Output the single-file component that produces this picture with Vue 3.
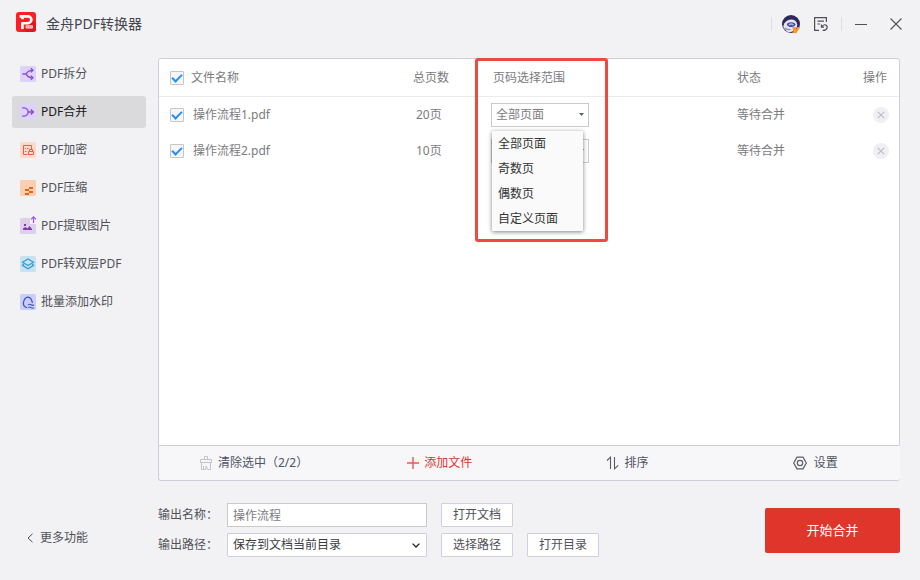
<script setup>
import { ref, computed } from 'vue'

const tools = [
  { id: 'split', label: 'PDF拆分' },
  { id: 'merge', label: 'PDF合并' },
  { id: 'lock', label: 'PDF加密' },
  { id: 'compress', label: 'PDF压缩' },
  { id: 'image', label: 'PDF提取图片' },
  { id: 'layer', label: 'PDF转双层PDF' },
  { id: 'watermark', label: '批量添加水印' }
]
const active = ref('merge')

const ranges = ['全部页面', '奇数页', '偶数页', '自定义页面']
const files = ref([
  { name: '操作流程1.pdf', pages: 20, range: '全部页面', status: '等待合并', checked: true },
  { name: '操作流程2.pdf', pages: 10, range: '全部页面', status: '等待合并', checked: true }
])
const openRow = ref(0)
const outputName = ref('操作流程')
const outputPath = ref('保存到文档当前目录')

const selectedCount = computed(() => files.value.filter((f) => f.checked).length)
const allChecked = computed({
  get: () => files.value.length > 0 && selectedCount.value === files.value.length,
  set: (value) => files.value.forEach((f) => { f.checked = value })
})

function pick(file, range) {
  file.range = range
  openRow.value = -1
}
function clearSelected() {
  files.value = files.value.filter((f) => !f.checked)
}
</script>

<template>
  <div class="app">
    <header class="titlebar">
      <svg class="logo" viewBox="0 0 20 20" aria-hidden="true">
        <rect width="20" height="20" rx="3" fill="#fb2025" />
        <path d="M8 17 L17 8 L20 11 V17 a3 3 0 0 1-3 3 H10z" fill="#dd181e" />
        <path d="M3.6 4.4 H12 a3.4 3.4 0 0 1 0 6.8 H6.4 V17" fill="none" stroke="#fff" stroke-width="2.6" stroke-linejoin="round" />
        <path d="M4.4 5 H7.8 V7.2 H5.6z" fill="#fff" />
        <rect x="9.6" y="13.2" width="7.4" height="3.4" rx="1" fill="#fbd5d6" />
        <path d="M10.8 14.9 H15.8" stroke="#ee6669" stroke-width="1" stroke-dasharray="1.3 .5" />
      </svg>
      <h1>金舟PDF转换器</h1>
      <div class="window-tools">
        <span class="divider"></span>
        <button class="icon-button avatar" type="button" aria-label="账户">
          <svg width="20" height="20" viewBox="0 0 20 20">
            <circle cx="10" cy="10" r="9" fill="#30275a" />
            <path d="M3.4 9.2 Q6 5.2 11 5.4 Q15.5 6 16.2 10.5 Q16.3 14.5 13 16.8 Q9 19 6 17.6 Q3 16 2.2 12.6z" fill="#e4e4f6" />
            <path d="M5.8 10.2 Q6.6 8.2 10.4 8.2 Q14.2 8.4 14.6 10.6 Q14 13 10.4 13 Q6.4 13 5.8 10.2z" fill="#4b4a96" />
            <path d="M8 11 q2-1.8 4.4-.2" fill="none" stroke="#a9baf4" stroke-width="1.4" />
            <path d="M3.6 14 Q5.6 16 9.4 15.4" fill="none" stroke="#8183bf" stroke-width="1.3" />
            <path d="M11.4 13 h3.2 l.4 2.6 l1.6-2.6 h2.8 l-4.2 6.2 h-2.6z" fill="#ff9820" />
          </svg>
        </button>
        <button class="icon-button history" type="button" aria-label="转换记录">
          <svg width="16" height="16" viewBox="0 0 16 16" fill="none" stroke="#505158" stroke-width="1.2">
            <path d="M6 14.4 H1.6 V1.6 H13.4 V6" />
            <path d="M4.5 5.1 H11 M4.5 8 H7" />
            <path d="M8.4 8.6 V11.2 H11 M8.8 11 Q10 8.4 12.2 8.8 Q14.6 9.6 14.1 12 Q13 14.8 9.6 14.4" />
          </svg>
        </button>
        <span class="divider"></span>
        <button class="icon-button minimize" type="button" aria-label="最小化">
          <svg width="12" height="12" viewBox="0 0 12 12"><path d="M0 6.5 H12" stroke="#505158" /></svg>
        </button>
        <button class="icon-button" type="button" aria-label="关闭">
          <svg width="12" height="12" viewBox="0 0 12 12"><path d="M.5 .5 L11.5 11.5 M11.5 .5 L.5 11.5" stroke="#505158" stroke-width="1.1" /></svg>
        </button>
      </div>
    </header>

    <div class="body">
      <aside class="sidebar">
        <nav>
          <button
            v-for="tool in tools"
            :key="tool.id"
            type="button"
            class="nav-item"
            :class="{ active: tool.id === active }"
            @click="active = tool.id"
          >
            <svg v-if="tool.id === 'split'" viewBox="0 0 16 16" fill="none" stroke="#8f4bc5">
              <rect width="16" height="16" rx="1.5" fill="#dcd3fc" stroke="none" />
              <path d="M2.5 8 H6.5 M6.3 8 Q7.3 4.5 12.5 4.3 M6.3 8 Q7.3 11.5 12.5 11.8" stroke-width="1.3" />
              <path d="M10.8 2.2 L13 4.3 L10.8 6.4 M10.8 9.6 L13 11.8 L10.8 13.9" stroke-width="1.3" />
            </svg>
            <svg v-else-if="tool.id === 'merge'" viewBox="0 0 16 16" fill="none" stroke="#8f4bc5">
              <rect width="16" height="16" rx="1.5" fill="#dcd3fc" stroke="none" />
              <path d="M2.2 3.9 H4 Q7.8 4.3 8.2 8 Q7.8 11.8 4 12.2 H2.2 M8 8 H13" stroke-width="1.3" />
              <path d="M10.8 5.6 L13.3 8 L10.8 10.4" stroke-width="1.5" />
            </svg>
            <svg v-else-if="tool.id === 'lock'" viewBox="0 0 16 16" fill="none" stroke="#ee5a5a">
              <rect width="16" height="16" rx="1.5" fill="#fddcc7" stroke="none" />
              <path d="M7.5 12.5 H3.5 V3.5 H11.5 V7 M5 6.5 H6 M7 6.5 H8.5 M5 9.5 H6.5" />
              <path d="M8.5 9.5 H13.5 V12.5 H8.5z M9.5 9.5 V7.5 H12.5 V9.5" />
            </svg>
            <svg v-else-if="tool.id === 'compress'" viewBox="0 0 16 16" fill="#e2681c">
              <rect width="16" height="16" rx="1.5" fill="#fdcfb0" />
              <path d="M9 7 h4 v2 h-4z M5 9 h4 v2 h-4z M9 11 h4 v2 h-4z M5 13 h4 v2 h-4z" />
            </svg>
            <svg v-else-if="tool.id === 'image'" viewBox="0 0 16 16">
              <path d="M1.5 0 H10 V6 H16 V14.5 a1.5 1.5 0 0 1-1.5 1.5 H1.5 A1.5 1.5 0 0 1 0 14.5 V1.5 A1.5 1.5 0 0 1 1.5 0z" fill="#ddd0ea" />
              <path d="M3 12 V10.5 L5.5 9 L7.5 10.5 L9.5 8 L12 11 V12z M4 6 h2 v2 h-2z" fill="#7b3eaa" />
              <path d="M13.5 5 V-1 M11 1.4 L13.5 -1.2 L16 1.4" fill="none" stroke="#a34cec" stroke-width="1.2" />
            </svg>
            <svg v-else-if="tool.id === 'layer'" viewBox="0 0 16 16" fill="none" stroke="#369ed4">
              <rect width="16" height="16" rx="1.5" fill="#c8e2ef" stroke="none" />
              <path d="M8 3 L13.5 6.3 L8 9.6 L2.5 6.3z" stroke-width="1.3" />
              <path d="M3.8 8 L2.5 9.3 L8 12.8 L13.5 9.3 L12.2 8" stroke-width="1.3" />
            </svg>
            <svg v-else viewBox="0 0 16 16" fill="none" stroke="#3f58b5">
              <rect width="16" height="16" rx="1.5" fill="#cacffa" stroke="none" />
              <path d="M7 13.6 Q3.2 13 3.4 8.6 Q4.6 3.4 8 3.2 Q11.4 3.4 12.4 9" stroke-width="1.3" />
              <path d="M8 10.8 q1.5-1.2 3 0 t3 0 M8 13.6 q1.5-1.2 3 0 t3 0" stroke-width="1.1" />
            </svg>
            <span>{{ tool.label }}</span>
          </button>
        </nav>
        <button class="more" type="button">
          <svg width="6" height="10" viewBox="0 0 6 10"><path d="M5.5 .8 L1 5 L5.5 9.2" fill="none" stroke="#505158" /></svg>
          <span>更多功能</span>
        </button>
      </aside>

      <main class="main">
        <section class="panel">
          <div class="list">
            <table>
              <colgroup>
                <col />
                <col class="col-pages" />
                <col class="col-range" />
                <col class="col-status" />
                <col class="col-action" />
              </colgroup>
              <thead>
                <tr>
                  <th>
                    <label class="check-label head">
                      <input v-model="allChecked" type="checkbox" /><span>文件名称</span>
                    </label>
                  </th>
                  <th>总页数</th>
                  <th class="range-head">页码选择范围<span class="highlight"></span></th>
                  <th>状态</th>
                  <th>操作</th>
                </tr>
              </thead>
              <tbody>
                <tr v-for="(file, index) in files" :key="file.name">
                  <td>
                    <label class="check-label">
                      <input v-model="file.checked" type="checkbox" /><span>{{ file.name }}</span>
                    </label>
                  </td>
                  <td class="pages">{{ file.pages }}页</td>
                  <td>
                    <div class="range">
                      <select v-model="file.range" :aria-label="file.name + ' 页码选择范围'">
                        <option v-for="range in ranges" :key="range">{{ range }}</option>
                      </select>
                      <svg class="caret" width="5" height="3" viewBox="0 0 5 3"><path d="M0 0 H5 L2.5 3z" fill="#4a6a6a" /></svg>
                      <ul v-if="openRow === index" class="menu">
                        <li v-for="range in ranges" :key="range">
                          <button type="button" @click="pick(file, range)">{{ range }}</button>
                        </li>
                      </ul>
                    </div>
                  </td>
                  <td>{{ file.status }}</td>
                  <td class="action">
                    <button class="remove" type="button" aria-label="移除" @click="files.splice(index, 1)">
                      <svg width="8" height="8" viewBox="0 0 8 8"><path d="M.8 .8 L7.2 7.2 M7.2 .8 L.8 7.2" stroke="#bcbdc6" stroke-width="1.2" /></svg>
                    </button>
                  </td>
                </tr>
              </tbody>
            </table>
          </div>
          <div class="toolbar">
            <button type="button" @click="clearSelected">
              <svg width="14" height="14" viewBox="0 0 14 14" fill="none" stroke="#c3c4c8">
                <path d="M5.5 3.5 V.5 H8.5 V3.5 M1.5 6.5 V3.5 H12.5 V6.5z M2.5 6.5 V13.5 H4.5 V10 M4.5 13.5 H7 V10 M7 10 L9 13.5 H11.5 V6.5" />
              </svg>
              <span>清除选中（{{ selectedCount }}/{{ files.length }}）</span>
            </button>
            <button class="add" type="button">
              <svg width="14" height="14" viewBox="0 0 14 14"><path d="M1 7 H13 M7 1 V13" stroke="#f05650" stroke-width="1.4" /></svg>
              <span>添加文件</span>
            </button>
            <button type="button">
              <svg width="14" height="14" viewBox="0 0 14 14" fill="none" stroke="#5a5c6b" stroke-width="1.1"><path d="M1 4.5 L4.5 1.2 V13 M8.5 1 V12.8 L12.3 9.3" /></svg>
              <span>排序</span>
            </button>
            <button class="settings" type="button">
              <svg width="14" height="14" viewBox="0 0 14 14" fill="none" stroke="#5a5c6b" stroke-width="1.2">
                <path d="M4 1.2 H10 L13.3 7 L10 12.8 H4 L.7 7z" /><circle cx="7" cy="7" r="2.7" />
              </svg>
              <span>设置</span>
            </button>
          </div>
        </section>

        <form class="output" @submit.prevent>
          <div class="fields">
            <div class="field">
              <label for="output-name">输出名称：</label>
              <input id="output-name" v-model="outputName" type="text" />
              <button type="button">打开文档</button>
            </div>
            <div class="field">
              <label for="output-path">输出路径：</label>
              <div class="path">
                <select id="output-path" v-model="outputPath">
                  <option>保存到文档当前目录</option>
                </select>
                <svg class="chevron" width="8" height="5" viewBox="0 0 8 5"><path d="M.6 .6 L4 4 L7.4 .6" fill="none" stroke="#222" stroke-width="1.3" /></svg>
              </div>
              <button type="button">选择路径</button>
              <button type="button">打开目录</button>
            </div>
          </div>
          <button class="start" type="submit">开始合并</button>
        </form>
      </main>
    </div>
  </div>
</template>

<style>
body {
  background: #f2f2f4;
}
</style>

<style scoped>
.app,
.app * {
  box-sizing: border-box;
}
.app {
  display: flex;
  flex-direction: column;
  min-height: 100vh;
  color: #505158;
  font-family: "Noto Sans", "Noto Sans CJK SC", sans-serif;
  font-size: 12px;
  line-height: 18px;
}
button,
input,
select {
  margin: 0;
  font: inherit;
  color: inherit;
}
button {
  padding: 0;
  border: 0;
  background: none;
}
svg {
  display: block;
  flex: none;
}

.titlebar {
  display: flex;
  align-items: center;
  height: 48px;
  padding: 0 18px 0 16px;
}
.logo {
  width: 20px;
  height: 20px;
  margin-bottom: 4px;
}
h1 {
  margin: 0 0 0 10px;
  font-size: 14px;
  font-weight: 400;
  line-height: 20px;
  color: #44454b;
}
.window-tools {
  display: flex;
  align-items: center;
  margin-left: auto;
}
.divider {
  width: 1px;
  height: 14px;
  background: #dedee3;
}
.avatar {
  margin: 0 12px 0 9px;
}
.history {
  margin-right: 12px;
}
.minimize {
  margin: 0 23px 0 13px;
}

.body {
  display: flex;
  flex: 1;
  gap: 12px;
  padding: 10px 20px 23px 12px;
}
.sidebar {
  display: flex;
  flex-direction: column;
  justify-content: space-between;
  width: 134px;
  flex: none;
}
nav {
  display: flex;
  flex-direction: column;
  gap: 6px;
}
.nav-item {
  display: flex;
  align-items: center;
  gap: 5px;
  height: 32px;
  padding: 0 8px;
  border-radius: 3px;
}
.nav-item svg {
  width: 16px;
  height: 16px;
  overflow: visible;
}
.nav-item.active {
  background: #dadadc;
  color: #17181c;
}
.more {
  display: flex;
  align-items: center;
  gap: 7px;
  padding: 10px 15px;
}

.main {
  display: flex;
  flex: 1;
  flex-direction: column;
  gap: 22px;
  min-width: 0;
}
.panel {
  display: flex;
  flex: 1;
  flex-direction: column;
}
.list {
  flex: 1;
  border: 1px solid #cdcedc;
  border-radius: 3px 3px 0 0;
  background: #fff;
}
table {
  width: 100%;
  border-collapse: separate;
  border-spacing: 0;
  table-layout: fixed;
  color: #7b7b7e;
}
.col-pages {
  width: 78px;
}
.col-range {
  width: 246px;
}
.col-status {
  width: 126px;
}
.col-action {
  width: 36px;
}
th,
td {
  padding: 0;
  font-weight: 400;
  text-align: left;
  white-space: nowrap;
}
th {
  height: 38px;
  border-bottom: 1px solid #ebebee;
}
td {
  height: 36px;
}
td.pages {
  padding-left: 3px;
}
td.action {
  padding-left: 10px;
}
.check-label {
  display: flex;
  align-items: center;
  gap: 9px;
  padding-left: 11px;
}
.check-label.head {
  gap: 7px;
}
.check-label input {
  display: grid;
  place-items: center;
  width: 14px;
  height: 14px;
  border: 1px solid #c6c6c8;
  border-radius: 1px;
  background: #f6f6f8;
  appearance: none;
}
.check-label input:checked::before {
  content: "";
  width: 8px;
  height: 4px;
  margin-bottom: 2px;
  border: solid #2490f5;
  border-width: 0 0 2px 2px;
  transform: rotate(-45deg);
}
.range-head {
  position: relative;
  padding-left: 2px;
}
.highlight {
  position: absolute;
  z-index: 3;
  top: -1px;
  left: -16px;
  width: 133px;
  height: 184px;
  border: 3px solid #ee4a41;
  border-radius: 3px;
  pointer-events: none;
}
.range {
  position: relative;
  width: 98px;
}
select {
  display: block;
  width: 100%;
  height: 24px;
  padding: 0 4px;
  border: 1px solid #c9cacc;
  border-radius: 0;
  background: #fff;
  appearance: none;
}
.caret {
  position: absolute;
  top: 10px;
  right: 5px;
  pointer-events: none;
}
.menu {
  position: absolute;
  z-index: 2;
  top: 28px;
  left: 1px;
  width: 91px;
  margin: 0;
  padding: 0;
  border-radius: 1px;
  background: #fafafa;
  box-shadow: 0 1px 4px rgba(0, 0, 0, 0.5);
  list-style: none;
}
.menu button {
  display: block;
  width: 100%;
  height: 25px;
  padding: 0 6px;
  color: #333;
  text-align: left;
}
.remove {
  display: grid;
  place-items: center;
  width: 16px;
  height: 16px;
  border-radius: 50%;
  background: #efeff5;
}

.toolbar {
  display: grid;
  grid-template-columns: 207fr 199fr 187fr 107fr;
  align-items: center;
  height: 35px;
  padding-left: 40px;
  border-bottom: 1px solid #cdcedc;
  border-left: 1px solid #cdcedc;
  border-radius: 0 0 3px 3px;
  background: #f7f7fa;
}
.toolbar button {
  display: flex;
  align-items: center;
  gap: 5px;
  color: #505365;
}
.toolbar .add {
  gap: 4px;
  color: #e2332c;
}
.toolbar .settings {
  gap: 7px;
}

.output {
  display: flex;
  align-items: center;
  justify-content: space-between;
}
.fields {
  display: flex;
  flex-direction: column;
  gap: 6px;
}
.field {
  display: flex;
  align-items: center;
  gap: 14px;
}
.field label {
  width: 55px;
  white-space: nowrap;
}
.field input,
.path {
  width: 200px;
}
.field input {
  height: 24px;
  padding: 0 5px;
  border: 1px solid #c9cacc;
  border-radius: 0;
  background: #fff;
  color: #7b7b7e;
}
.path {
  position: relative;
}
.path select {
  padding: 0 5px;
  border-color: #cdd1de;
  border-radius: 1px;
  color: #3b3c42;
}
.chevron {
  position: absolute;
  top: 10px;
  right: 7px;
  pointer-events: none;
}
.field button {
  width: 72px;
  height: 24px;
  border: 1px solid #cdd1de;
  border-radius: 1px;
  background: #fff;
}
.start {
  width: 135px;
  height: 45px;
  border-radius: 2px;
  background: #e0352b;
  color: #fff;
  font-size: 13px;
}
</style>
